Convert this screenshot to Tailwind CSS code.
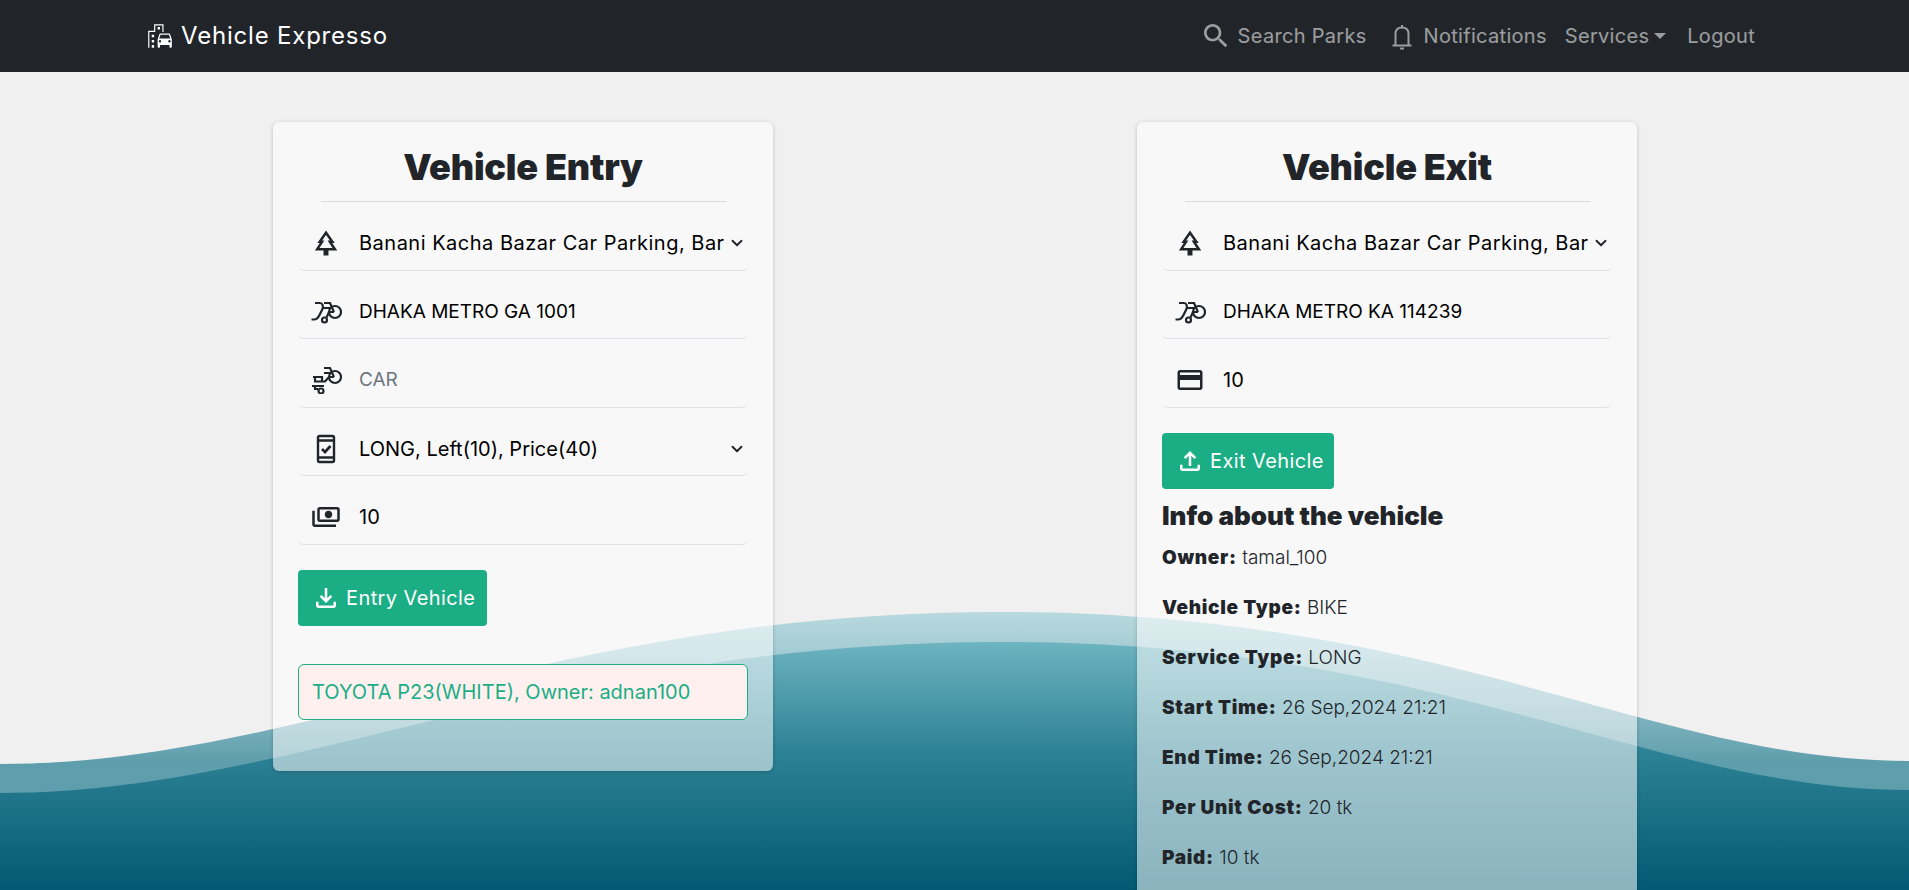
<!DOCTYPE html>
<html lang="en">

<head>
    <meta charset="UTF-8">
    <meta name="viewport" content="width=device-width, initial-scale=1.0">
    <title>Vehicle Expresso</title>
    <script src="https://cdn.jsdelivr.net/npm/@tailwindcss/browser@4"></script>
</head>

<body class="relative h-screen overflow-hidden bg-[#f0f0f0] text-[#212529] [font-family:Inter,sans-serif]">

    <!-- waves behind the cards -->
    <svg class="absolute left-0 top-0" width="1909" height="890" viewBox="0 0 1909 890">
        <defs>
            <linearGradient id="sea" gradientUnits="userSpaceOnUse" x1="0" y1="612" x2="0" y2="890">
                <stop offset="0" stop-color="#7fc1cc" />
                <stop offset="0.5" stop-color="#2e8295" />
                <stop offset="1" stop-color="#025a72" />
            </linearGradient>
            <linearGradient id="seaBack" gradientUnits="userSpaceOnUse" x1="0" y1="612" x2="0" y2="800">
                <stop offset="0" stop-color="#7fc1cc" stop-opacity="0.5" />
                <stop offset="0.8" stop-color="#2e8295" stop-opacity="0.75" />
            </linearGradient>
        </defs>
        <path fill="url(#seaBack)" d="M0 764C300 764 550 612 1000 612C1450 612 1650 761 1909 761V890H0Z" />
        <path fill="url(#sea)" d="M0 793C300 793 550 642 1000 642C1450 642 1650 790 1909 790V890H0Z" />
    </svg>

    <nav class="relative flex h-[72px] items-center justify-between bg-[#212529] pl-[147px] pr-[154px]">
        <a href="#" class="flex items-center gap-[8px] text-[24px] tracking-[0.8px] text-white">
            <svg class="h-[26px] w-[26px]" viewBox="1 2 22 20" preserveAspectRatio="none" fill="currentColor">
                <path d="M20.57 10.66C20.43 10.26 20.05 10 19.6 10h-7.19c-.46 0-.83.26-.98.66L10 14.77l.01 5.51c0 .38.31.72.69.72h.62c.38 0 .68-.38.68-.76V19h8v1.24c0 .38.31.76.69.76h.61c.38 0 .69-.34.69-.72L22 18.91v-4.14l-1.43-4.11zM12.41 11h7.19l1.03 3h-9.25l1.03-3zM12 17c-.55 0-1-.45-1-1s.45-1 1-1 1 .45 1 1-.45 1-1 1zm8 0c-.55 0-1-.45-1-1s.45-1 1-1 1 .45 1 1-.45 1-1 1z" />
                <path d="M14 9h1V3H7v5H2v13h1V9h5V4h6v5zM5 11h2v2H5zM10 5h2v2h-2zM5 15h2v2H5zM5 19h2v2H5z" />
            </svg>
            Vehicle Expresso
        </a>
        <div class="flex items-center text-[20px] tracking-[0.3px] text-white/55">
            <a href="#" class="flex items-center gap-[6px]">
                <svg class="h-[32px] w-[32px]" viewBox="0 0 24 24" fill="currentColor">
                    <path d="M15.5 14h-.79l-.28-.27C15.41 12.59 16 11.11 16 9.5 16 5.91 13.09 3 9.5 3S3 5.91 3 9.5 5.91 16 9.5 16c1.61 0 3.09-.59 4.23-1.57l.27.28v.79l5 4.99L20.49 19l-4.99-5zm-6 0C7.01 14 5 11.99 5 9.5S7.01 5 9.5 5 14 7.01 14 9.5 11.99 14 9.5 14z" />
                </svg>
                Search Parks
            </a>
            <a href="#" class="ml-[25px] flex items-center gap-[12px]">
                <svg class="mt-[2px] h-[26px] w-[20px]" viewBox="0 0 20 26" fill="none" stroke="currentColor" stroke-width="2">
                    <path d="M3.5 21V10C3.5 6 6 3.5 10 3.5S16.500 6 16.500 10V21M0.500 21.500H19.500M10 3V1M8 24.500H12" />
                </svg>
                Notifications
            </a>
            <a href="#" class="ml-[18px] flex items-center gap-[5px]">
                Services
                <span class="h-0 w-0 border-x-[6px] border-t-[6px] border-x-transparent border-t-current"></span>
            </a>
            <a href="#" class="ml-[21px]">Logout</a>
        </div>
    </nav>

    <main class="relative flex items-start justify-between pl-[273px] pr-[272px] pt-[50px]">

        <!-- Vehicle Entry -->
        <section class="w-[500px] rounded-md bg-white/[0.54] px-[25px] pb-[51px] pt-[20px] shadow-[0_1px_4px_rgba(0,0,0,0.2)]">
            <h1 class="mb-[8px] h-[51px] text-center text-[36px] font-black leading-[51px] tracking-[-0.2px]">Vehicle Entry</h1>
            <hr class="mx-auto w-[405px] border-[#d5dddd]">
            <div class="relative flex h-[68.500px] items-center rounded-b-md border-b border-[#dee2e6] pt-[15px]">
                <span class="flex w-[61px] justify-center pr-[6px]">
                    <svg class="h-[30px] w-[30px]" viewBox="0 0 24 24" fill="currentColor">
                        <path d="M17 12h2L12 2 5.050 12H7l-3.900 6h6.920v4h3.950v-4H21l-4-6zM6.790 16l3.900-6H8.880l3.130-4.500 3.120 4.500h-1.860l3.900 6H6.790z" />
                    </svg>
                </span>
                <select class="w-[388px] appearance-none bg-transparent text-[20px] tracking-[0.5px] text-black outline-none">
                    <option>Banani Kacha Bazar Car Parking, Bar</option>
                </select>
                <svg class="absolute right-[5px] top-[35px] h-[12px] w-[12px]" viewBox="0 0 16 16" fill="none" stroke="#212529" stroke-width="2.500" stroke-linecap="round" stroke-linejoin="round">
                    <path d="M2 5l6 6 6-6" />
                </svg>
            </div>
            <div class="flex h-[68.500px] items-center rounded-b-md border-b border-[#dee2e6] pt-[15px]">
                <span class="flex w-[61px] justify-center pr-[4px]">
                    <svg class="h-[24px] w-[31px]" viewBox="0 0 31 24" fill="none" stroke="currentColor" stroke-width="2.200">
                        <path d="M4 3H9C11.500 3 12.500 6 11.500 9L8 16C7 18 5 19.500 3 19.500H0.500M13 3H19L23 12M12 8H20M15.500 17.500L18 12H23" />
                        <circle cx="13.500" cy="20" r="2.500" />
                        <circle cx="24" cy="12" r="6" />
                    </svg>
                </span>
                <input class="w-[388px] bg-transparent text-[19px] text-black outline-none" value="DHAKA METRO GA 1001">
            </div>
            <div class="flex h-[68.500px] items-center rounded-b-md border-b border-[#dee2e6] pt-[15px]">
                <span class="flex w-[61px] justify-center pr-[4px]">
                    <svg class="h-[28px] w-[31px]" viewBox="0 0 31 28" fill="none" stroke="currentColor" stroke-width="2.200">
                        <path d="M13 2H19L23 11M13 7H20M2 11H11V15M4 11V15M3 15.500H14L18 11H23M1 20H13M4 20V23H7" />
                        <circle cx="10" cy="25" r="2.500" />
                        <circle cx="24" cy="11" r="6" />
                    </svg>
                </span>
                <input class="w-[388px] bg-transparent text-[19px] text-[#6c757d] outline-none" value="CAR" disabled>
            </div>
            <div class="relative flex h-[68.500px] items-center rounded-b-md border-b border-[#dee2e6] pt-[15px]">
                <span class="flex w-[61px] justify-center pr-[6px]">
                    <svg class="h-[30px] w-[30px]" viewBox="0 0 30 30" fill="none" stroke="currentColor" stroke-width="2.400">
                        <rect x="7" y="2" width="16" height="26" rx="1.500" />
                        <path d="M7 6.500H23M7 23.500H23" />
                        <path d="M11 15L14 18L19.500 12" stroke-width="2.600" />
                    </svg>
                </span>
                <select class="w-[388px] appearance-none bg-transparent text-[20px] text-black outline-none">
                    <option>LONG, Left(10), Price(40)</option>
                </select>
                <svg class="absolute right-[5px] top-[35px] h-[12px] w-[12px]" viewBox="0 0 16 16" fill="none" stroke="#212529" stroke-width="2.500" stroke-linecap="round" stroke-linejoin="round">
                    <path d="M2 5l6 6 6-6" />
                </svg>
            </div>
            <div class="flex h-[68.500px] items-center rounded-b-md border-b border-[#dee2e6] pt-[15px]">
                <span class="flex w-[61px] justify-center pr-[6px]">
                    <svg class="h-[30px] w-[30px] -scale-x-100" viewBox="0 0 24 24" fill="currentColor">
                        <path d="M19 14V6c0-1.100-.9-2-2-2H3c-1.100 0-2 .9-2 2v8c0 1.100.9 2 2 2h14c1.100 0 2-.9 2-2zm-2 0H3V6h14v8zm-7-7c-1.660 0-3 1.340-3 3s1.340 3 3 3 3-1.340 3-3-1.340-3-3-3zm13 0v11c0 1.100-.9 2-2 2H4v-2h17V7h2z" />
                    </svg>
                </span>
                <input class="w-[388px] bg-transparent text-[20px] text-black outline-none" value="10">
            </div>
            <button class="mt-[25px] flex h-[56px] w-[189px] items-center gap-[5px] rounded-[4px] bg-[#1bae85] pl-[13px] text-[20px] tracking-[0.4px] text-white">
                <svg class="h-[30px] w-[30px]" viewBox="0 0 24 24" fill="currentColor">
                    <path d="M18 15v3H6v-3H4v3c0 1.100.9 2 2 2h12c1.100 0 2-.9 2-2v-3h-2zM17 11l-1.410-1.410L13 12.170V4h-2v8.170L8.410 9.590 7 11l5 5 5-5z" />
                </svg>
                Entry Vehicle
            </button>
            <div class="mt-[38px] flex h-[56px] items-center rounded-md border border-[#1bae85] bg-[#fff0f0] px-[13px] text-[20px] text-[#1bae85]">
                TOYOTA P23(WHITE), Owner: adnan100
            </div>
        </section>

        <!-- Vehicle Exit -->
        <section class="w-[500px] rounded-md bg-white/[0.54] px-[25px] pb-[51px] pt-[20px] shadow-[0_1px_4px_rgba(0,0,0,0.2)]">
            <h1 class="mb-[8px] h-[51px] text-center text-[36px] font-black leading-[51px] tracking-[-0.2px]">Vehicle Exit</h1>
            <hr class="mx-auto w-[405px] border-[#d5dddd]">
            <div class="relative flex h-[68.500px] items-center rounded-b-md border-b border-[#dee2e6] pt-[15px]">
                <span class="flex w-[61px] justify-center pr-[6px]">
                    <svg class="h-[30px] w-[30px]" viewBox="0 0 24 24" fill="currentColor">
                        <path d="M17 12h2L12 2 5.050 12H7l-3.900 6h6.920v4h3.950v-4H21l-4-6zM6.790 16l3.900-6H8.880l3.130-4.500 3.120 4.500h-1.860l3.900 6H6.790z" />
                    </svg>
                </span>
                <select class="w-[388px] appearance-none bg-transparent text-[20px] tracking-[0.5px] text-black outline-none">
                    <option>Banani Kacha Bazar Car Parking, Bar</option>
                </select>
                <svg class="absolute right-[5px] top-[35px] h-[12px] w-[12px]" viewBox="0 0 16 16" fill="none" stroke="#212529" stroke-width="2.500" stroke-linecap="round" stroke-linejoin="round">
                    <path d="M2 5l6 6 6-6" />
                </svg>
            </div>
            <div class="flex h-[68.500px] items-center rounded-b-md border-b border-[#dee2e6] pt-[15px]">
                <span class="flex w-[61px] justify-center pr-[4px]">
                    <svg class="h-[24px] w-[31px]" viewBox="0 0 31 24" fill="none" stroke="currentColor" stroke-width="2.200">
                        <path d="M4 3H9C11.500 3 12.500 6 11.500 9L8 16C7 18 5 19.500 3 19.500H0.500M13 3H19L23 12M12 8H20M15.500 17.500L18 12H23" />
                        <circle cx="13.500" cy="20" r="2.500" />
                        <circle cx="24" cy="12" r="6" />
                    </svg>
                </span>
                <input class="w-[388px] bg-transparent text-[19px] text-black outline-none" value="DHAKA METRO KA 114239">
            </div>
            <div class="flex h-[68.500px] items-center rounded-b-md border-b border-[#dee2e6] pt-[15px]">
                <span class="flex w-[61px] justify-center pr-[6px]">
                    <svg class="h-[30px] w-[30px]" viewBox="0 0 24 24" fill="currentColor">
                        <path d="M20 4H4c-1.110 0-1.990.89-1.990 2L2 18c0 1.110.89 2 2 2h16c1.110 0 2-.89 2-2V6c0-1.110-.89-2-2-2zm0 14H4v-6h16v6zm0-10H4V6h16v2z" />
                    </svg>
                </span>
                <input class="w-[388px] bg-transparent text-[20px] text-black outline-none" value="10">
            </div>
            <button class="mt-[25px] flex h-[56px] w-[172px] items-center gap-[5px] rounded-[4px] bg-[#1bae85] pl-[13px] text-[20px] tracking-[0.4px] text-white">
                <svg class="h-[30px] w-[30px]" viewBox="0 0 24 24" fill="currentColor">
                    <path d="M18 15v3H6v-3H4v3c0 1.100.9 2 2 2h12c1.100 0 2-.9 2-2v-3h-2zM7 9l1.410 1.410L11 7.830V16h2V7.830l2.590 2.580L17 9l-5-5-5 5z" />
                </svg>
                Exit Vehicle
            </button>
            <h2 class="mt-[12px] h-[32px] text-[26px] font-black leading-[30px]">Info about the vehicle</h2>
            <p class="h-[50px] text-[19px] font-light leading-[50px]"><b class="font-black tracking-[0.7px]">Owner:</b> tamal_100</p>
            <p class="h-[50px] text-[19px] font-light leading-[50px]"><b class="font-black tracking-[0.7px]">Vehicle Type:</b> BIKE</p>
            <p class="h-[50px] text-[19px] font-light leading-[50px]"><b class="font-black tracking-[0.7px]">Service Type:</b> LONG</p>
            <p class="h-[50px] text-[19px] font-light leading-[50px]"><b class="font-black tracking-[0.7px]">Start Time:</b> 26 Sep,2024 21:21</p>
            <p class="h-[50px] text-[19px] font-light leading-[50px]"><b class="font-black tracking-[0.7px]">End Time:</b> 26 Sep,2024 21:21</p>
            <p class="h-[50px] text-[19px] font-light leading-[50px]"><b class="font-black tracking-[0.7px]">Per Unit Cost:</b> 20 tk</p>
            <p class="h-[50px] text-[19px] font-light leading-[50px]"><b class="font-black tracking-[0.7px]">Paid:</b> 10 tk</p>
        </section>
    </main>

</body>

</html>
